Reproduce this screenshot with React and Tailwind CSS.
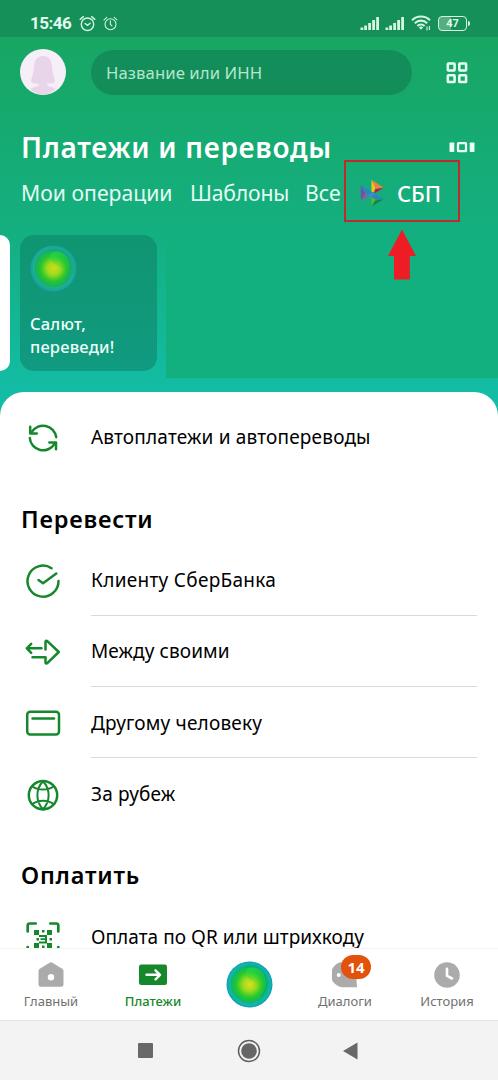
import { useId } from "react";

const Alarm = ({ size, thin }) => (
  <svg width={size} height={size} viewBox="0 0 18 18" fill="none" stroke="#d5f5e3" strokeWidth={thin ? 1.3 : 1.5} strokeLinecap="round">
    <circle cx="9" cy="9.8" r="6.6" />
    <path d="M1.2 4.6 4.6 1.7M16.8 4.6 13.4 1.7" />
    {thin ? <path d="M8.8 5.8v4l2 2.2" /> : <path d="m6.4 9 2.6 2 2.8-2.2" />}
  </svg>
);

const Signal = () => (
  <svg width="20" height="15" viewBox="0 0 20 15" fill="#d5f5e3">
    <rect x="0.5" y="11.5" width="2.8" height="2.5" />
    <rect x="4.2" y="9.5" width="2.8" height="4.5" />
    <rect x="8.2" y="7" width="2.8" height="7" />
    <rect x="12.2" y="4" width="2.8" height="10" />
    <rect x="16.2" y="1" width="2.8" height="13" />
  </svg>
);

const Wifi = () => (
  <svg width="20" height="16" viewBox="0 0 20 16" fill="none" stroke="#d5f5e3" strokeWidth="2.1">
    <path d="M1 5.2C6 .2 14 .2 19 5.2" />
    <path d="M3.8 8.2c3.6-3.5 8.8-3.5 12.4 0" />
    <path d="M6.4 11c2-2 5.2-2 7.2 0" />
    <path d="M7.8 12.2 10 14.8l2.2-2.6q-2.2-1.2-4.4 0Z" fill="#d5f5e3" stroke="none" />
    <path d="M16 11.5v4M18.4 11v4" strokeWidth="1.1" />
  </svg>
);

const StatusBar = () => (
  <div className="flex h-[37px] items-center justify-between bg-[#149058] pr-[28px] pl-[30px] pt-[9px] text-[#e2faee]">
    <div className="flex items-center">
      <span className="w-[49px] font-[Roboto] text-[17px] leading-none font-bold tracking-[-0.5px]">15:46</span>
      <Alarm size={17} />
      <span className="w-[7px]" />
      <Alarm size={15} thin />
    </div>
    <div className="flex items-center">
      <Signal />
      <span className="w-[5px]" />
      <Signal />
      <span className="w-[6px]" />
      <Wifi />
      <span className="w-[7px]" />
      <div className="flex h-[15px] w-[29px] items-center justify-center rounded-[4px] border-[1.5px] border-[#d5f5e3] bg-linear-to-r from-[#56ad80] from-45% to-transparent to-45% font-[Roboto] text-[11px] leading-none font-bold">
        47
      </div>
      <span className="ml-px h-[5px] w-[2px] rounded-r bg-[#d5f5e3]" />
    </div>
  </div>
);

const Avatar = () => (
  <svg width="46" height="46" viewBox="0 0 46 46">
    <circle cx="23" cy="23" r="23" fill="#f6eff7" />
    <path
      d="M23 7c-6 0-8.4 4-8.8 9.500C13.700 23 12.500 27 11 31.500c-.4 1.600.8 2.500 2.400 2.700l5.600.6c.2 1.800-.6 2.200-2.500 2.700-3 .8-5 1.500-6.200 2.800A23 23 0 0 0 23 46a23 23 0 0 0 12.700-5.700c-1.200-1.300-3.200-2-6.200-2.800-1.900-.5-2.700-.9-2.500-2.700l5.600-.6c1.600-.2 2.700-1.100 2.400-2.700C33.500 27 32.300 23 31.800 16.500 31.400 11 29 7 23 7Z"
      fill="#e8d5e9"
    />
  </svg>
);

const GridIcon = () => (
  <svg width="22" height="22" viewBox="0 0 22 22" fill="none" stroke="#e9fff4" strokeWidth="2.500">
    <rect x="1.800" y="1.600" width="6.800" height="6.800" rx=".6" />
    <rect x="13.300" y="1.600" width="6.800" height="6.800" rx=".6" />
    <rect x="1.800" y="13.300" width="6.800" height="6.800" rx=".6" />
    <rect x="13.300" y="13.300" width="6.800" height="6.800" rx=".6" />
  </svg>
);

const StoriesIcon = () => (
  <svg width="26" height="12" viewBox="0 0 26 12" fill="#eafff6">
    <rect x="0.500" y="1.500" width="4.800" height="9.500" rx=".8" />
    <rect x="9" y="2.200" width="8" height="8" rx=".5" fill="none" stroke="#eafff6" strokeWidth="2.300" />
    <rect x="20.700" y="1.500" width="4.800" height="9.500" rx=".8" />
  </svg>
);

const SbpLogo = () => (
  <svg width="24" height="28" viewBox="0 0 24 28">
    <path d="M.7 6.300 5.500 14 .9 22Z" fill="#6b54a0" />
    <path d="m.9 22 4.600-8 3 3.200Z" fill="#8a5fa8" />
    <path d="M11.500.8 15.300 7v5l-3.800 1.500Z" fill="#f2c618" />
    <path d="m11.500.8 12.200 8-8 1.200Z" fill="#e8863a" />
    <path d="m23.700 8.800-9 5.500v-4Z" fill="#b51f4a" />
    <path d="M11.500 15.200 15.500 18v3.200l-4 6.300Z" fill="#62b52c" />
    <path d="m11.500 27.500 3.700-6 8.300-1.200Z" fill="#0a8a43" />
    <path d="m.7 6.300 22.900 13.900-8.300.2L3.800 12.500Z" fill="#2f82c4" />
    <path d="m8 17.500 3.500-4.200 3.200 2-4 2.600Z" fill="#3f8fcf" />
  </svg>
);

const SalutOrb = ({ vivid }) => {
  const id = useId();
  return (
    <svg width="47" height="47" viewBox="0 0 47 47">
      <defs>
        <radialGradient id={`${id}a`} cx="50%" cy="50%" r="50%">
          <stop offset="0" stopColor={vivid ? "#dfe01c" : "#d0dc1c"} />
          <stop offset=".28" stopColor="#9cdb1d" />
          <stop offset=".56" stopColor={vivid ? "#26ca2c" : "#28c530"} />
          <stop offset=".76" stopColor={vivid ? "#10b765" : "#1ab35c"} />
          <stop offset=".9" stopColor={vivid ? "#0eb5ad" : "#19aa92"} />
          <stop offset="1" stopColor={vivid ? "#109ab5" : "#1c9dac"} />
        </radialGradient>
        <linearGradient id={`${id}b`} x1=".2" y1="0" x2=".6" y2=".8">
          <stop offset="0" stopColor="#1ee04c" />
          <stop offset="1" stopColor="#1ec93b" stopOpacity="0" />
        </linearGradient>
      </defs>
      <circle cx="23.500" cy="23.500" r="23" fill={`url(#${id}a)`} />
      <path d="M20 11C21 5.500 31 5 36 11c5 6 5 14 1 20-3-6-5-8-10-11-4-2-7-4-7-9Z" fill={`url(#${id}b)`} opacity=".65" />
      <path d="M19 6c7-2.500 14-.5 19 5.500 5 8 3 18-3 24" fill="none" stroke="#0f9f92" strokeWidth="1.400" opacity=".6" />
      <path d="M19 2.500C8 5 2.500 14 3.500 25c1.500 11 10 18 21 18 10 0 17-6 19-15" fill="none" stroke="#17c4b7" strokeWidth="1.200" opacity=".4" />
    </svg>
  );
};

const Stroke = ({ children }) => (
  <svg width="36" height="36" viewBox="0 0 36 36" fill="none" stroke="#16882c" strokeWidth="2.500" strokeLinecap="round" strokeLinejoin="round">
    {children}
  </svg>
);

const AutoIcon = () => (
  <Stroke>
    <path d="M31.200 17.200A13.300 13.300 0 0 0 6.600 12.200M4.800 18A13.300 13.300 0 0 0 29.500 23.800" />
    <path d="M5.200 6.800v6.600h6.600M24.400 22.600h6.600v6.600" />
  </Stroke>
);

const CheckIcon = () => (
  <Stroke>
    <path d="M26.500 5.200A15.500 15.500 0 1 0 33.500 18" />
    <path d="m13.500 17 4.500 3.300L31.300 10.500" />
  </Stroke>
);

const TransferIcon = () => (
  <Stroke>
    <path d="M16.500 14.300H1.800M6.200 9.800l-4.400 4.500 4.400 4.500" />
    <path d="M20.500 15.500V7.500q.6-1.200 1.800-.4L33.800 18 22.300 29.200q-1.500.8-1.800-.5v-5.500H7.500" />
  </Stroke>
);

const CardIcon = () => (
  <Stroke>
    <rect x="2.200" y="6.800" width="31.800" height="22.800" rx="3" />
    <path d="M7.500 13.500h21.500" />
  </Stroke>
);

const GlobeIcon = () => (
  <Stroke>
    <circle cx="18" cy="18.200" r="14.200" />
    <path d="M18 4.200c-7.500 8-7.500 20 0 28M18 4.200c7.500 8 7.500 20 0 28M7.500 9.500c5.500 4 15.500 4 21 0M7.500 27c5.500-4.400 15.500-4.400 21 0" strokeWidth="2" />
  </Stroke>
);

const QrIcon = () => (
  <Stroke>
    <path d="M2.700 11.500V5.500q0-2 2-2h6M25.300 3.500h6q2 0 2 2v6M2.700 27v6M33.300 27v6" strokeWidth="2.700" />
    <g fill="#16882c" stroke="none">
      <path d="M9 10h5v5H9zM22 10h5v5h-5zM9 23h5v5H9zM22 23h5v5h-5z" />
      <path d="M17 10h2.500v2.500H17zM17 25.500h2.500V28H17zM11.500 18h2.500v2.500h-2.500zM24.500 18H27v2.500h-2.500z" />
      <path d="M14 15h8v2h-8zM20 15h2v8h-2zM14 21.500h8v2h-8zM15.500 18.300h4.500v1.800h-4.500z" />
    </g>
  </Stroke>
);

const HomeIcon = () => (
  <svg width="26" height="26" viewBox="0 0 26 26">
    <path d="M11.600.7q1.400-.8 2.800 0l9.800 6q1.300.8 1.300 2.300v13.500q0 2.300-2.300 2.300H2.800Q.5 24.800.5 22.500V9q0-1.500 1.300-2.300Z" fill="#ababab" />
    <circle cx="13" cy="15.300" r="3.200" fill="#fff" />
  </svg>
);

const PaymentsIcon = () => (
  <svg width="28" height="26" viewBox="0 0 28 26">
    <rect y="2.500" width="28" height="20.500" rx="2.200" fill="#16882c" />
    <path d="M7.500 12.800h13M16.500 8.300l4.500 4.500-4.500 4.500" fill="none" stroke="#fff" strokeWidth="2.400" strokeLinecap="round" strokeLinejoin="round" />
  </svg>
);

const ChatIcon = () => (
  <svg width="26" height="26" viewBox="0 0 26 26">
    <path d="M13 0a13 12.700 0 1 0 0 25.300h12l-.5-7A13 13 0 0 0 13 0Z" fill="#ababab" />
    <circle cx="6.700" cy="13" r="2" fill="#fff" />
  </svg>
);

const ClockIcon = () => (
  <svg width="26" height="26" viewBox="0 0 26 26">
    <circle cx="13" cy="13" r="12.800" fill="#ababab" />
    <path d="M13 6.800v7l5 2.700" fill="none" stroke="#fff" strokeWidth="2.600" strokeLinecap="round" />
  </svg>
);

const Row = ({ icon, divider, className = "tracking-[0.180px]", children }) => (
  <div className="flex h-[71.200px] shrink-0 pl-[25px]">
    <div className="flex w-[66px] items-center pt-px">{icon}</div>
    <div className={`mr-[21px] flex flex-1 items-center border-b pt-px text-[19px] whitespace-nowrap ${divider ? "border-[#dadada]" : "border-transparent"}`}>
      <span className={className}>{children}</span>
    </div>
  </div>
);

const NavItem = ({ icon, label, active, className = "" }) => (
  <div className={`flex w-[102px] flex-col items-center pt-[13px] text-[13px] leading-[18px] ${active ? "font-medium text-[#16882c]" : "text-[#707070]"}`}>
    <div className="relative h-[26px]">{icon}</div>
    <span className={`mt-[4px] whitespace-nowrap ${className}`}>{label}</span>
  </div>
);

const Header = () => (
  <div className="h-[420px] shrink-0 bg-linear-to-b from-[#18a560] from-5% via-[#14af80] via-55% to-[#13bca4] to-93%">
    <StatusBar />
    <div className="flex items-center pt-[12px] pl-[20px]">
      <Avatar />
      <div className="ml-[25px] flex h-[45px] w-[321px] items-center rounded-full bg-[#138e5b] pt-px pl-[15px] text-[16.700px] tracking-[0.080px] text-[#b4e6cc]">
        <span>Название или ИНН</span>
      </div>
      <div className="ml-[34px] pt-px">
        <GridIcon />
      </div>
    </div>

    <div className="mt-[32px] flex h-[40px] items-center justify-between pr-[23px] pl-[21px]">
      <h1 className="text-[28px] leading-[40px] font-semibold tracking-[0.700px] whitespace-nowrap text-white">Платежи и переводы</h1>
      <StoriesIcon />
    </div>

    <div className="mt-[10px] flex h-[32px] items-center pl-[21px] text-[21.200px] leading-[32px] whitespace-nowrap text-[#e4fbf3]">
      <span className="w-[169px]">Мои операции</span>
      <span className="w-[115px] tracking-[-0.200px]">Шаблоны</span>
      <span className="w-[39px]">Все</span>
      <div className="relative -mt-[4px] flex h-[62px] w-[116px] items-center border-2 border-[#bc2c2c] pt-[3px] pl-[14px]">
        <SbpLogo />
        <span className="ml-[13px] text-[22px] font-medium text-white">СБП</span>
        <svg className="absolute top-[67px] left-[42px]" width="28" height="51" viewBox="0 0 28 51">
          <path d="M14 .5 28 27h-6.200v23.500H6V27H0Z" fill="#ee1c25" />
        </svg>
      </div>
    </div>

    <div className="mt-[26px] flex h-[143px] items-start">
      <div className="h-[136px] w-[10px] rounded-r-[12px] bg-white" />
      <div className="ml-[10px] flex h-[136px] w-[137px] flex-col rounded-[14px] bg-linear-to-b from-[#109570] to-[#109a80] pt-[10px] pl-[10px] text-[16.500px] leading-[22.500px] font-medium tracking-[0.200px] text-[#ecfff8]">
        <SalutOrb />
        <span className="mt-[21px]">Салют,</span>
        <span>переведи!</span>
      </div>
      <div className="ml-[9px] h-full flex-1 bg-[#13b07f]" />
    </div>
  </div>
);

const SystemNav = () => (
  <div className="flex h-[60px] shrink-0 items-center justify-center border-t border-[#e5e5e5] bg-[#f3f3f3] pr-[2px]">
    <div className="size-[15px] rounded-[1px] bg-[#686868]" />
    <svg className="mr-[82px] ml-[84px]" width="24" height="24" viewBox="0 0 24 24">
      <circle cx="12" cy="12" r="10.500" fill="none" stroke="#606060" strokeWidth="1.500" />
      <circle cx="12" cy="12" r="7.800" fill="#666" />
    </svg>
    <svg width="15" height="18" viewBox="0 0 15 18">
      <path d="M0 9 14.500.5v17Z" fill="#686868" />
    </svg>
  </div>
);

export default function App() {
  return (
    <div className="flex h-[1080px] w-[498px] flex-col overflow-hidden bg-white font-['Noto_Sans',sans-serif] text-black">
      <Header />
      <main className="relative -mt-[28px] flex min-h-0 flex-1 flex-col overflow-hidden rounded-t-[24px] bg-white pt-[10px]">
        <Row icon={<AutoIcon />}>Автоплатежи и автопереводы</Row>
        <h2 className="mt-[29px] h-[34px] shrink-0 pl-[21px] text-[23.500px] leading-[34px] font-semibold tracking-[0.800px]">Перевести</h2>
        <div className="mt-[8.700px]">
          <Row icon={<CheckIcon />} divider className="tracking-[0.300px]">Клиенту СберБанка</Row>
          <Row icon={<TransferIcon />} divider className="tracking-[0.100px]">Между своими</Row>
          <Row icon={<CardIcon />} divider>Другому человеку</Row>
          <Row icon={<GlobeIcon />}>За рубеж</Row>
        </div>
        <h2 className="mt-[28px] h-[34px] shrink-0 pl-[21px] text-[23.500px] leading-[34px] font-semibold tracking-[0.800px]">Оплатить</h2>
        <div className="mt-[10px]">
          <Row icon={<QrIcon />} className="tracking-[0.050px]">Оплата по QR или штрихкоду</Row>
        </div>
      </main>
      <nav className="flex h-[72px] shrink-0 border-t border-[#f3f3f3] bg-white">
        <NavItem icon={<HomeIcon />} label="Главный" />
        <NavItem icon={<PaymentsIcon />} label="Платежи" active />
        <div className="flex w-[90px] justify-center pt-[12px]">
          <SalutOrb vivid />
        </div>
        <NavItem
          icon={
            <>
              <ChatIcon />
              <span className="absolute -top-[7px] left-[9px] flex h-[24px] w-[30px] items-center justify-center rounded-full bg-[#e2520a] text-[15px] leading-none font-bold text-white">14</span>
            </>
          }
          label="Диалоги"
        />
        <NavItem icon={<ClockIcon />} label="История" />
      </nav>
      <SystemNav />
    </div>
  );
}
